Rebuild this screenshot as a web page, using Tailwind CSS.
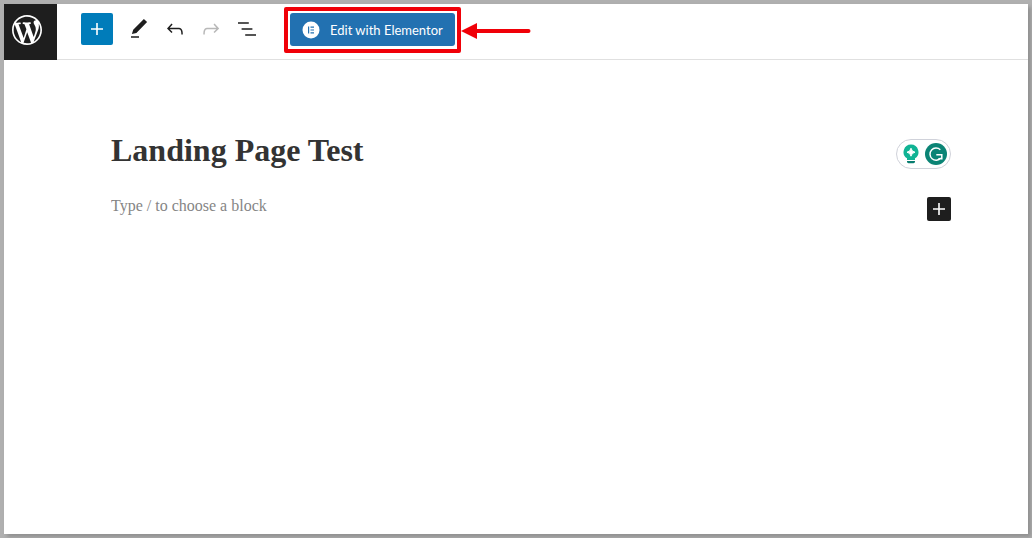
<!DOCTYPE html>
<html lang="en">
<head>
<meta charset="utf-8">
<title>Edit Page</title>
<script src="https://cdn.jsdelivr.net/npm/@tailwindcss/browser@4"></script>
</head>
<body class="flex min-h-screen bg-[#b0b0b0] p-1 font-['Lato','Noto_Sans',sans-serif]">
<div class="flex flex-1 flex-col bg-white shadow-[3px_3px_4px_#909090]">
  <header class="flex h-14 items-start border-b border-[#e0e0e0]">
    <a href="#" aria-label="View pages" class="flex h-14 w-[53px] shrink-0 items-center bg-[#1e1e1e] pb-1 pl-2 text-white">
      <svg class="size-[30px]" viewBox="0 0 20 20" fill="currentColor"><path d="M20 10c0-5.51-4.49-10-10-10C4.48 0 0 4.49 0 10c0 5.52 4.48 10 10 10 5.51 0 10-4.48 10-10zM7.78 15.37L4.37 6.22c.55-.02 1.17-.08 1.17-.08.5-.06.44-1.13-.06-1.11 0 0-1.45.11-2.37.11-.18 0-.37 0-.58-.01C4.12 2.69 6.87 1.11 10 1.11c2.33 0 4.45.87 6.05 2.34-.68-.11-1.65.39-1.65 1.58 0 .74.45 1.36.9 2.1.35.61.55 1.36.55 2.46 0 1.49-1.4 5-1.4 5l-3.03-8.37c.54-.02.82-.17.82-.17.5-.05.44-1.25-.06-1.22 0 0-1.44.12-2.38.12-.87 0-2.33-.12-2.33-.12-.5-.03-.56 1.2-.06 1.22l.92.08 1.26 3.41zM17.41 10c.24-.64.74-1.87.43-4.25.7 1.29 1.05 2.71 1.05 4.25 0 3.29-1.73 6.24-4.4 7.78.97-2.59 1.94-5.2 2.92-7.78zM6.1 18.09C3.12 16.65 1.11 13.53 1.11 10c0-1.3.23-2.48.72-3.59C3.25 10.3 4.67 14.2 6.1 18.09zm4.03-6.63l2.58 6.98c-.86.29-1.76.45-2.71.45-.79 0-1.57-.11-2.29-.33.81-2.38 1.62-4.74 2.42-7.1z"/></svg>
    </a>
    <div class="flex items-center pt-[9px] pl-6 text-[#1e1e1e]">
      <button aria-label="Add block" class="mr-2 flex size-8 items-center justify-center rounded-xs bg-[#007cba] text-white">
        <svg class="size-6" viewBox="0 0 24 24" fill="currentColor"><path d="M18 11.2h-5.2V6h-1.6v5.2H6v1.6h5.2V18h1.6v-5.2H18z"/></svg>
      </button>
      <button aria-label="Tools" class="flex h-8 w-9 items-center justify-center">
        <svg class="size-6" viewBox="0 0 24 24" fill="currentColor"><path d="M20.1 5.1L16.9 2 6.2 12.7l-1.3 4.4 4.5-1.2L20.1 5.1zM4 20.8h8v-1.5H4v1.5z"/></svg>
      </button>
      <button aria-label="Undo" class="flex h-8 w-9 items-center justify-center">
        <svg class="size-6" viewBox="0 0 24 24" fill="currentColor"><path d="M18.3 11.7c-.6-.6-1.4-.9-2.3-.9H6.7l2.9-3.3-1.1-1-4.5 5L8.5 16l1-1-2.7-2.7H16c.5 0 .9.2 1.3.5 1 1 1 3.4 1 4.5v.3h1.5v-.2c0-1.5 0-4.3-1.5-5.7z"/></svg>
      </button>
      <button aria-label="Redo" class="flex h-8 w-9 items-center justify-center text-[#b8b8b8]">
        <svg class="size-6" viewBox="0 0 24 24" fill="currentColor"><path d="M15.6 6.5l-1.1 1 2.9 3.3H8c-.9 0-1.7.3-2.3.9-1.4 1.5-1.4 4.2-1.4 5.6v.2h1.5v-.3c0-1.1 0-3.5 1-4.5.3-.3.7-.5 1.3-.5h9.2L14.5 15l1.1 1.1 4.6-4.6-4.6-5z"/></svg>
      </button>
      <button aria-label="List view" class="flex h-8 w-9 items-center justify-center">
        <svg class="size-6" viewBox="0 0 24 24" fill="currentColor"><path d="M13.8 5.2H3v1.5h10.8V5.2zm-3.6 12v1.5H21v-1.5H10.2zm7.2-6H6.6v1.5h10.8v-1.5z"/></svg>
      </button>
    </div>
    <div class="ml-[19px] flex items-center pt-[3px]">
      <div class="rounded-xs border-4 border-[#f00008] p-0.5 pb-[3px]">
        <button class="flex h-[33px] w-[165px] items-center rounded-[3px] bg-[#2271b1] pl-3 text-[13px] whitespace-nowrap text-white">
          <svg class="mr-2.5 size-[18px] shrink-0" viewBox="0 0 18 18"><circle cx="9" cy="9" r="8.500" fill="#fff"/><path d="M6 5.500h1.200v7H6zM8.500 5.500H12v1.200H8.500zM8.500 8.400H12v1.200H8.500zM8.500 11.300H12v1.200H8.500z" fill="#2271b1"/></svg>
          <span class="pt-0.5">Edit with Elementor</span>
        </button>
      </div>
      <svg class="mt-0.5 h-4 w-[70px]" viewBox="0 0 70 16" fill="#f00008"><path d="M0 8L16 0v6h51.500a2 2 0 0 1 0 4H16v6z"/></svg>
    </div>
  </header>
  <main class="flex-1 pr-[77px] pl-[107px] font-['Liberation_Serif',serif]">
    <div class="flex items-start justify-between pt-[71px]">
      <h1 class="text-[32px] leading-[38px] font-bold text-[#333]">Landing Page Test</h1>
      <div class="mt-2 flex h-[30px] w-[55px] items-center gap-1.5 rounded-full border border-[#d0d2da] pl-1.5">
        <button aria-label="Writing suggestions">
          <svg class="h-5 w-4" viewBox="0 0 16 20"><path d="M8 .5a7.500 7.500 0 0 1 4 13.800V16H4v-1.700A7.500 7.500 0 0 1 8 .5z" fill="#10b394"/><path d="M4 17h8v.8q0 1.400-1.500 1.400h-5Q4 19.200 4 17.800z" fill="#087d70"/><path d="M8 4.200Q8.600 7.600 12 8.200Q8.600 8.800 8 12.200Q7.400 8.800 4 8.200Q7.400 7.600 8 4.200z" fill="#fff" stroke="#fff"/></svg>
        </button>
        <button aria-label="Grammar check">
          <svg class="size-[22px]" viewBox="0 0 22 22"><circle cx="11" cy="11" r="11" fill="#0b8475"/><path d="M15.300 6.700A6.100 6.100 0 1 0 15.800 15M11.300 11.800H16.800V16.500M13.300 15.700H17.500" fill="none" stroke="#fff" stroke-width="1.500"/></svg>
        </button>
      </div>
    </div>
    <div class="mt-[27px] flex items-center justify-between">
      <input aria-label="Block content" placeholder="Type / to choose a block" class="mb-1.5 min-w-0 flex-1 text-base leading-5 text-[#333] outline-none placeholder:text-[#858585]">
      <button aria-label="Add block" class="flex size-6 items-center justify-center rounded-xs bg-[#1e1e1e] text-white">
        <svg class="size-6" viewBox="0 0 24 24" fill="currentColor"><path d="M18 11.2h-5.2V6h-1.6v5.2H6v1.6h5.2V18h1.6v-5.2H18z"/></svg>
      </button>
    </div>
  </main>
</div>
</body>
</html>
